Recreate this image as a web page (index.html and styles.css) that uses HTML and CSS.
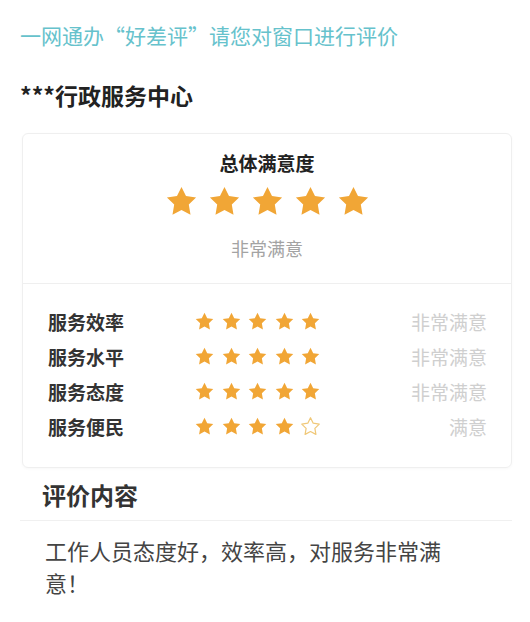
FILE: index.html
```html
<!DOCTYPE html>
<html>
<head>
    <title>窗口评价</title>
    <link rel="stylesheet" href="styles.css">
</head>
<body>
    <div class="page">
        <h1 class="title">一网通办“好差评”请您对窗口进行评价</h1>
        <h2 class="center-name">***行政服务中心</h2>

        <div class="card">
            <div class="overall">
                <div class="overall-title">总体满意度</div>
                <div class="stars big">
                    <svg viewBox="0 0 24 24"><path class="on" d="M12 2l3.09 6.26L22 9.27l-5 4.87 1.18 6.88L12 17.77l-6.18 3.25L7 14.14 2 9.27l6.91-1.01L12 2z"/></svg>
                    <svg viewBox="0 0 24 24"><path class="on" d="M12 2l3.09 6.26L22 9.27l-5 4.87 1.18 6.88L12 17.77l-6.18 3.25L7 14.14 2 9.27l6.91-1.01L12 2z"/></svg>
                    <svg viewBox="0 0 24 24"><path class="on" d="M12 2l3.09 6.26L22 9.27l-5 4.87 1.18 6.88L12 17.77l-6.18 3.25L7 14.14 2 9.27l6.91-1.01L12 2z"/></svg>
                    <svg viewBox="0 0 24 24"><path class="on" d="M12 2l3.09 6.26L22 9.27l-5 4.87 1.18 6.88L12 17.77l-6.18 3.25L7 14.14 2 9.27l6.91-1.01L12 2z"/></svg>
                    <svg viewBox="0 0 24 24"><path class="on" d="M12 2l3.09 6.26L22 9.27l-5 4.87 1.18 6.88L12 17.77l-6.18 3.25L7 14.14 2 9.27l6.91-1.01L12 2z"/></svg>
                </div>
                <div class="overall-text">非常满意</div>
            </div>

            <div class="details" id="details"></div>
        </div>

        <div class="comment-head">评价内容</div>
        <p class="comment-body">工作人员态度好，效率高，对服务非常满意！</p>
    </div>

    <script>
        const star = 'M12 2l3.09 6.26L22 9.27l-5 4.87 1.18 6.88L12 17.77l-6.18 3.25L7 14.14 2 9.27l6.91-1.01L12 2z';
        const items = [
            { name: '服务效率', score: 5, text: '非常满意' },
            { name: '服务水平', score: 5, text: '非常满意' },
            { name: '服务态度', score: 5, text: '非常满意' },
            { name: '服务便民', score: 4, text: '满意' }
        ];

        let html = '';
        items.forEach(item => {
            let stars = '';
            for (let i = 0; i < 5; i++) {
                const cls = i < item.score ? 'on' : 'off';
                stars += `<svg viewBox="0 0 24 24"><path class="${cls}" d="${star}"/></svg>`;
            }
            html += `<div class="row">
                <span class="row-name">${item.name}</span>
                <span class="stars small">${stars}</span>
                <span class="row-text">${item.text}</span>
            </div>`;
        });
        document.getElementById('details').innerHTML = html;
    </script>
</body>
</html>
```

FILE: styles.css
```css
body { margin: 0; background: #fff; font-family: "Noto Sans CJK SC", "Noto Sans", sans-serif; }
.page { padding: 20px 18px 0 20px; }

.title { margin: 0; font-size: 21px; line-height: 30px; font-weight: normal; color: #66c2cc; }
.center-name { margin: 28px 0 0; font-size: 23px; line-height: 34px; font-weight: bold; color: #222; }

.card { margin: 21px 0 0 2px; border: 1px solid #efefef; border-radius: 6px; box-shadow: 0 1px 3px rgba(0,0,0,0.03); }
.overall { padding: 16px 0 22px; text-align: center; border-bottom: 1px solid #efefef; }
.overall-title { font-size: 19px; line-height: 26px; font-weight: bold; color: #222; }
.overall-text { margin-top: 16px; font-size: 18px; line-height: 26px; color: #a3a3a3; }

.stars { display: flex; }
.stars svg { display: block; }
.stars .on { fill: #f1a636; }
.stars .off { fill: none; stroke: #f0c878; stroke-width: 1.4; stroke-linejoin: round; }
.stars.big { justify-content: center; gap: 8px; margin-top: 8px; height: 35px; }
.stars.big svg { width: 35px; height: 35px; }
.stars.small { gap: 5.5px; }
.stars.small svg { width: 21px; height: 21px; }

.details { padding: 20px 24px 23px 25px; }
.row { display: flex; align-items: center; height: 35px; }
.row-name { width: 146px; font-size: 19px; font-weight: bold; color: #333; }
.row-text { margin-left: auto; font-size: 19px; color: #cfcfcf; }

.comment-head { margin: 10px 0 0; padding: 0 0 8px 22px; font-size: 24px; line-height: 34px; font-weight: bold; color: #333; border-bottom: 1px solid #f0f0f0; }
.comment-body { margin: 0; padding: 13px 0 0 25px; width: 405px; font-size: 22px; line-height: 32px; color: #444; }
```
